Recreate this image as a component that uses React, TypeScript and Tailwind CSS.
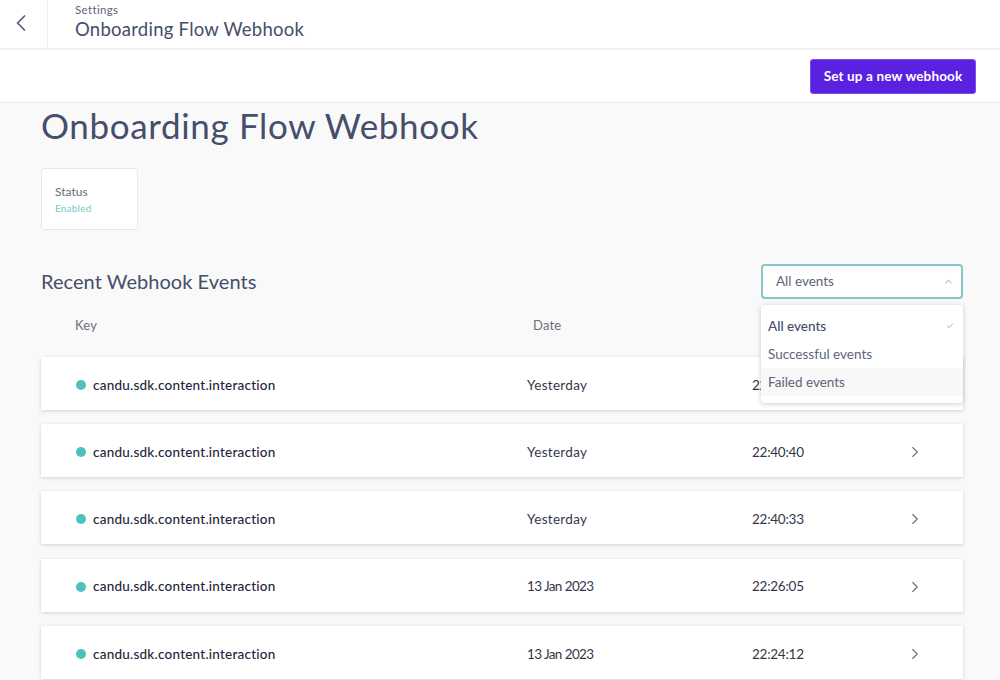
import React from 'react'
import { ChevronLeft, ChevronRight, ChevronUp, Check } from 'lucide-react'

const events = [
  { date: 'Yesterday', dateClass: 'tracking-[0.3px]', time: '22:40:47' },
  { date: 'Yesterday', dateClass: 'tracking-[0.3px]', time: '22:40:40' },
  { date: 'Yesterday', dateClass: 'tracking-[0.3px]', time: '22:40:33' },
  { date: '13 Jan 2023', dateClass: 'tracking-[-0.6px]', time: '22:26:05' },
  { date: '13 Jan 2023', dateClass: 'tracking-[-0.6px]', time: '22:24:12' },
]

const App: React.FC = () => {
  return (
    <div className="h-[680px] w-[1000px] overflow-hidden bg-[#f9f9f9] font-['Lato','Liberation_Sans',sans-serif] text-[#454e6b]">
      {/* Top bar */}
      <div className="flex h-[50px] border-b-2 border-[#f3f3f3] bg-white">
        <div className="flex w-[48px] items-center border-r border-[#ececec] pl-[7px]">
          <ChevronLeft className="mt-[-2px] h-[28px] w-[28px] text-[#58607a]" strokeWidth={1.5} />
        </div>
        <div className="pl-[27px]">
          <div className="mt-[2px] text-[11.5px] leading-[15px] tracking-[0.35px] text-[#5d6479]">Settings</div>
          <div className="text-[18.5px] leading-[24px] tracking-[0.25px]">Onboarding Flow Webhook</div>
        </div>
      </div>

      {/* Action bar */}
      <div className="flex h-[53px] items-center justify-end border-b border-[#ececec] bg-white pr-[24px]">
        <button className="h-[35px] w-[166px] rounded-[3px] border border-[#7a4cf0] bg-[#5a22e0] text-[13.5px] font-bold tracking-[0.15px] text-white">
          Set up a new webhook
        </button>
      </div>

      <div className="relative pl-[41px] pr-[37px]">
        <h1 className="text-[35px] leading-[44px] tracking-[0.65px] text-[#454e6b]">Onboarding Flow Webhook</h1>

        <div className="mt-[21px] h-[62px] w-[97px] rounded-[3px] border border-[#e8e8ea] bg-white pl-[13px] pt-[15px]">
          <div className="text-[12px] leading-[16px] text-[#666c7e]">Status</div>
          <div className="mt-[1px] text-[10px] leading-[14px] tracking-[0.2px] text-[#6fcbc6]">Enabled</div>
        </div>

        <div className="mt-[34px] flex items-center justify-between">
          <h2 className="pb-[2px] text-[20px] leading-[32px] tracking-[0.05px]">Recent Webhook Events</h2>
          <div className="flex h-[35px] w-[202px] items-center justify-between rounded-[4px] border-2 border-[#86c6c6] bg-white pl-[13px] pr-[7px] text-[13.5px] text-[#5d6479]">
            <span>All events</span>
            <ChevronUp className="h-[11px] w-[11px] text-[#8d93a3]" strokeWidth={2} />
          </div>
        </div>

        {/* Table header */}
        <div className="mt-[17px] flex h-[20px] items-center text-[13px] tracking-[0.2px] text-[#6a7082]">
          <span className="ml-[34px] w-[458px]">Key</span>
          <span>Date</span>
        </div>

        {/* Rows */}
        <div className="mt-[21px] flex flex-col gap-[14.2px]">
          {events.map((row, i) => (
            <div
              key={i}
              className="flex h-[53px] w-[922px] flex-none items-center bg-white pt-[3px] text-[13.5px] shadow-[0_1px_4px_rgba(0,0,0,0.16)]"
            >
              <span className="ml-[35px] h-[10px] w-[10px] rounded-full bg-[#4fc1bd]" />
              <span className="ml-[7px] w-[434px] font-medium tracking-[0.23px] text-[#23263a]">candu.sdk.content.interaction</span>
              <span className={`w-[225px] text-[#33374a] ${row.dateClass}`}>{row.date}</span>
              <span className="w-[154px] tracking-[-0.25px] text-[#33374a]">{row.time}</span>
              <ChevronRight className="h-[18px] w-[18px] text-[#6a7082]" strokeWidth={1.5} />
            </div>
          ))}
        </div>

        {/* Dropdown menu */}
        <div className="absolute left-[761px] top-[202px] h-[98px] w-[202px] rounded-[3px] bg-white pt-[7px] text-[13.5px] text-[#5d6479] shadow-[0_1px_5px_rgba(0,0,0,0.2)]">
          <div className="flex h-[28px] items-center justify-between pl-[7px] pr-[9px] text-[#454e6b]">
            <span className="font-medium">All events</span>
            <Check className="h-[8px] w-[8px] text-[#6fcbc6]" strokeWidth={3} />
          </div>
          <div className="flex h-[28px] items-center pl-[7px]">Successful events</div>
          <div className="flex h-[28px] items-center bg-[#f8f8f8] pl-[7px]">Failed events</div>
        </div>
      </div>
    </div>
  )
}

export default App
